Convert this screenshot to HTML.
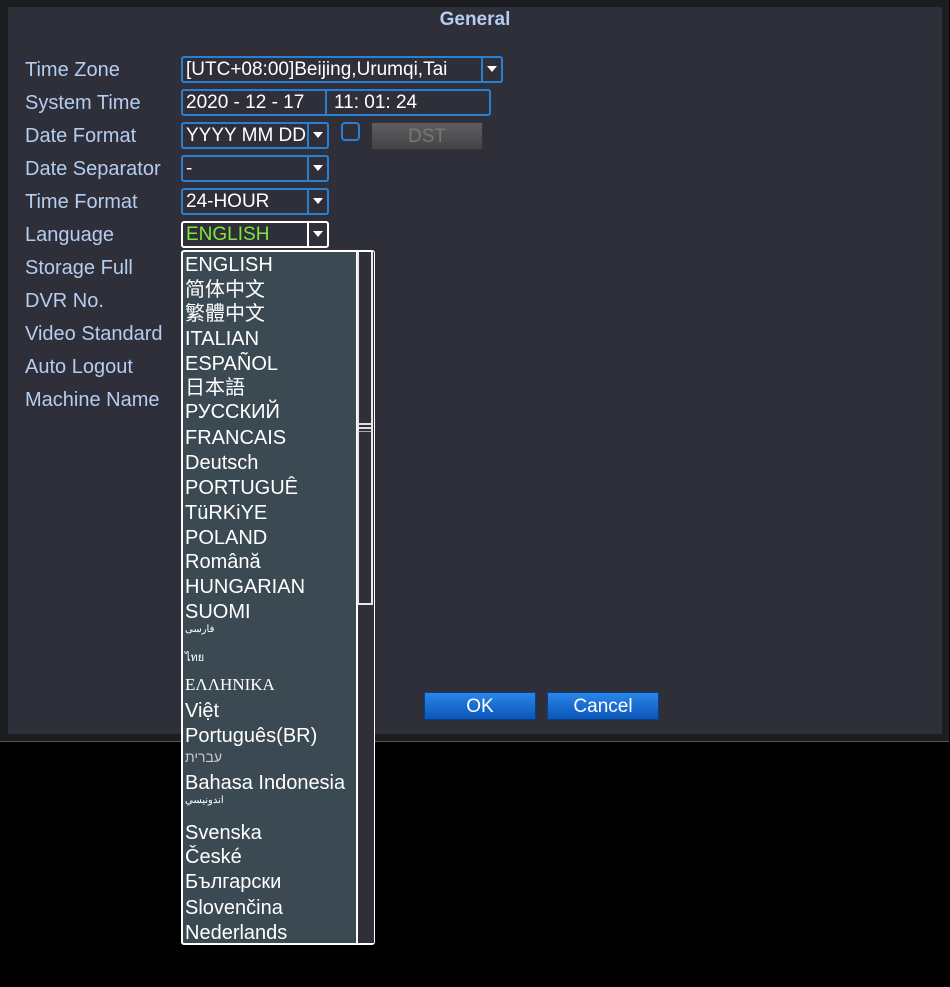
<!DOCTYPE html>
<html><head><meta charset="utf-8"><style>
*{margin:0;padding:0;box-sizing:border-box}
body{width:950px;height:987px;background:#000;position:relative;overflow:hidden;font-family:"Liberation Sans","Noto Sans CJK SC",sans-serif}
.a{position:absolute;white-space:nowrap}
.frame{left:0;top:0;width:949px;height:742px;background:#1c1d21;border-bottom:1px solid #55565a}
.panel{left:8px;top:7px;width:934px;height:727px;background:#2f2f3a}
.lab{color:#b4cdf0;font-size:20px;left:25px;line-height:22px}
.f{border:2px solid #2b7fd0;border-radius:3px;color:#fff;font-size:19px;line-height:24px;padding-left:3px}
.arr{position:absolute;right:0;top:0;bottom:0;width:20px;border-left:2px solid #2b7fd0}
.arr:after{content:"";position:absolute;left:4px;top:8px;border-left:5px solid transparent;border-right:5px solid transparent;border-top:6px solid #fff}
.it{left:185px;color:#fff;font-size:20px;line-height:22px}
.btn{top:692px;width:112px;height:28px;background:linear-gradient(#2a86e8,#0b55b8);border:1px solid #0a3f8a;color:#fff;font-size:19px;text-align:center;line-height:27px}
</style></head><body>
<div class="a frame"></div>
<div class="a panel"></div>
<div class="a" style="left:0;width:950px;top:9px;text-align:center;color:#b4cdf0;font-weight:bold;font-size:19px">General</div>

<div class="a lab" style="top:59px">Time Zone</div>
<div class="a lab" style="top:92px">System Time</div>
<div class="a lab" style="top:125px">Date Format</div>
<div class="a lab" style="top:158px">Date Separator</div>
<div class="a lab" style="top:191px">Time Format</div>
<div class="a lab" style="top:224px">Language</div>
<div class="a lab" style="top:257px">Storage Full</div>
<div class="a lab" style="top:290px">DVR No.</div>
<div class="a lab" style="top:323px">Video Standard</div>
<div class="a lab" style="top:356px">Auto Logout</div>
<div class="a lab" style="top:389px">Machine Name</div>

<div class="a f" style="left:181px;top:56px;width:322px;height:27px">[UTC+08:00]Beijing,Urumqi,Tai<div class="arr"></div></div>
<div class="a f" style="left:181px;top:89px;width:310px;height:27px">2020 - 12 - 17<span style="position:absolute;left:142px;top:0;bottom:0;border-left:2px solid #2b7fd0;padding-left:7px">11: 01: 24</span></div>
<div class="a f" style="left:181px;top:122px;width:148px;height:27px">YYYY MM DD<div class="arr"></div></div>
<div class="a" style="left:341px;top:122px;width:19px;height:19px;border:2px solid #2b7fd0;border-radius:4px"></div>
<div class="a" style="left:371px;top:122px;width:112px;height:28px;background:linear-gradient(#5e5e60,#444446);border:1px solid #333;color:#777;font-size:19px;text-align:center;line-height:27px">DST</div>
<div class="a f" style="left:181px;top:155px;width:148px;height:27px">-<div class="arr"></div></div>
<div class="a f" style="left:181px;top:188px;width:148px;height:27px">24-HOUR<div class="arr"></div></div>
<div class="a f" style="left:181px;top:221px;width:148px;height:27px;border-color:#fff;color:#7ee83a">ENGLISH<div class="arr" style="border-left-color:#fff"></div></div>

<div class="btn a" style="left:424px">OK</div>
<div class="btn a" style="left:547px">Cancel</div>

<div class="a" style="left:181px;top:250px;width:194px;height:695px;background:#3b4a52;border:2px solid #fff;border-radius:3px"></div>
<div class="a" style="left:356px;top:252px;width:18px;height:691px;background:#2f2f3a;border-left:2px solid #fff"></div>
<div class="a" style="left:357px;top:252px;width:16px;height:353px;border:2px solid #e8e8e8;border-top:none"></div>
<div class="a" style="left:359px;top:423px;width:12px;height:2px;background:#ddd"></div>
<div class="a" style="left:359px;top:427px;width:12px;height:2px;background:#ddd"></div>
<div class="a" style="left:359px;top:431px;width:12px;height:1px;background:#aaa"></div>

<div class="a it" style="top:254px">ENGLISH</div>
<div class="a it" style="top:279px">简体中文</div>
<div class="a it" style="top:303px">繁體中文</div>
<div class="a it" style="top:328px">ITALIAN</div>
<div class="a it" style="top:353px">ESPAÑOL</div>
<div class="a it" style="top:377px">日本語</div>
<div class="a it" style="top:401px">РУССКИЙ</div>
<div class="a it" style="top:427px">FRANCAIS</div>
<div class="a it" style="top:452px">Deutsch</div>
<div class="a it" style="top:477px">PORTUGUÊ</div>
<div class="a it" style="top:502px">TüRKiYE</div>
<div class="a it" style="top:527px">POLAND</div>
<div class="a it" style="top:551px">Română</div>
<div class="a it" style="top:576px">HUNGARIAN</div>
<div class="a it" style="top:601px">SUOMI</div>
<div class="a it" style="top:623px;font-size:10px;line-height:14px">فارسی</div>
<div class="a it" style="top:651px;font-size:11px;line-height:14px">ไทย</div>
<div class="a it" style="top:674px;font-family:'Liberation Serif',serif;font-size:17px">ΕΛΛΗΝΙΚΑ</div>
<div class="a it" style="top:700px">Việt</div>
<div class="a it" style="top:725px">Português(BR)</div>
<div class="a it" style="top:748px;font-size:14px;line-height:18px;color:#ccc">עברית</div>
<div class="a it" style="top:772px">Bahasa Indonesia</div>
<div class="a it" style="top:794px;font-size:10px;line-height:14px">اندونيسي</div>
<div class="a it" style="top:822px">Svenska</div>
<div class="a it" style="top:846px">České</div>
<div class="a it" style="top:871px">Български</div>
<div class="a it" style="top:897px">Slovenčina</div>
<div class="a it" style="top:922px">Nederlands</div>
</body></html>
